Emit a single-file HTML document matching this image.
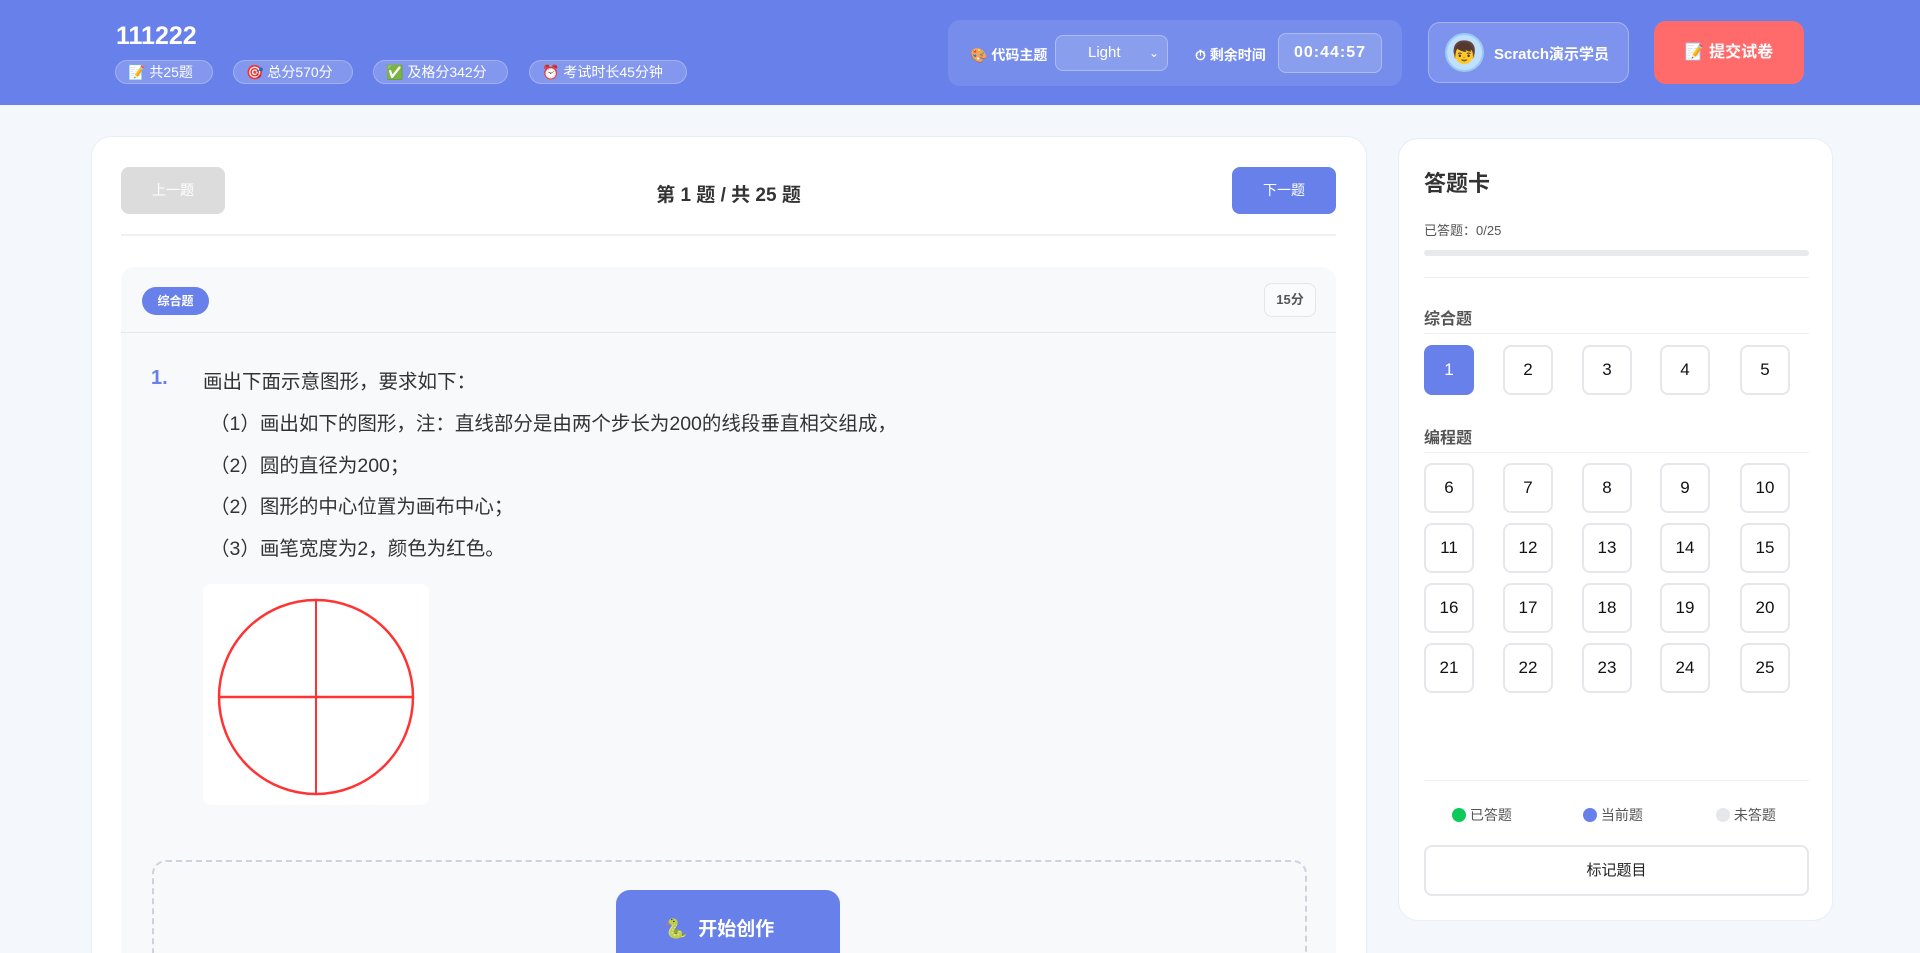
<!DOCTYPE html>
<html><head><meta charset="utf-8"><style>
*{box-sizing:border-box;margin:0;padding:0}
html,body{width:1920px;height:953px;overflow:hidden}
body{background:#f4f7fc;font-family:"Liberation Sans","Noto Sans CJK SC",sans-serif;color:#333}
#w{position:relative;width:1920px;height:953px;overflow:hidden}
.hd{position:absolute;left:0;top:0;width:1920px;height:105px;background:#6780ea}
.ab{position:absolute}
.title{left:116px;top:22px;color:#fff;font-size:25px;font-weight:bold}
.badge{position:absolute;top:60px;height:24px;border-radius:12px;background:rgba(255,255,255,.18);border:1px solid rgba(255,255,255,.25);color:#fff;font-size:14px;line-height:22px;padding-left:12px}
.grp{left:948px;top:20px;width:454px;height:66px;border-radius:12px;background:rgba(255,255,255,.1)}
.lbl{color:#fff;font-size:14px;font-weight:bold;position:absolute;top:45px}
.box{position:absolute;border:1px solid rgba(255,255,255,.3);background:rgba(255,255,255,.15);border-radius:8px;color:#fff}
.card{position:absolute;background:#fff;border-radius:20px;border:1px solid #e6eefb}
.nb{position:absolute;top:167px;width:104px;height:47px;border-radius:8px;color:#fff;font-size:14px;text-align:center;line-height:47px}
.q{position:absolute;font-size:19.5px;color:#333}
.g{position:absolute;width:50px;height:50px;border:2px solid #e5e7eb;border-radius:8px;text-align:center;line-height:46px;font-size:17px;color:#111;background:#fff}
.sec{position:absolute;left:1424px;width:385px;font-size:16px;font-weight:bold;color:#555;border-bottom:1px solid #eceff3;padding-bottom:4px}
</style></head><body><div id="w">
<div class="hd"></div>
<div class="ab title">111222</div>
<div class="badge" style="left:115px;width:98px">📝 共25题</div>
<div class="badge" style="left:233px;width:120px">🎯 总分570分</div>
<div class="badge" style="left:373px;width:135px">✅ 及格分342分</div>
<div class="badge" style="left:529px;width:158px">⏰ 考试时长45分钟</div>
<div class="ab grp"></div>
<div class="lbl" style="left:970px">🎨 代码主题</div>
<div class="box" style="left:1055px;top:35px;width:113px;height:36px;font-size:15px;line-height:34px;padding-left:32px">Light<span style="position:absolute;right:8px;font-size:12px">⌄</span></div>
<div class="lbl" style="left:1195px">⏱ 剩余时间</div>
<div class="box" style="left:1278px;top:33px;width:104px;height:40px;font-size:16px;font-weight:bold;line-height:38px;text-align:center;letter-spacing:1px">00:44:57</div>
<div class="box" style="left:1428px;top:22px;width:201px;height:61px;border-radius:12px"></div>
<div class="ab" style="left:1445px;top:33px;width:39px;height:39px;border-radius:50%;background:#bfe0ff;border:2px solid #9cc8f5;text-align:center;line-height:36px;font-size:22px">👦</div>
<div class="ab" style="left:1494px;top:43px;color:#fff;font-size:15px;font-weight:bold">Scratch演示学员</div>
<div class="ab" style="left:1654px;top:21px;width:150px;height:63px;border-radius:12px;background:#ff6b6b;color:#fff;font-size:16px;font-weight:bold;text-align:center;line-height:63px">📝 提交试卷</div>

<div class="card" style="left:91px;top:136px;width:1276px;height:817px;border-bottom:none;border-radius:20px 20px 0 0"></div>
<div class="nb" style="left:121px;background:#dcdcdc">上一题</div>
<div class="ab" style="left:121px;width:1215px;top:180px;text-align:center;font-size:19px;font-weight:bold;color:#333">第 1 题 / 共 25 题</div>
<div class="nb" style="left:1232px;background:#6780ea">下一题</div>
<div class="ab" style="left:121px;top:234px;width:1215px;height:2px;background:#f0f0f0"></div>
<div class="ab" style="left:121px;top:267px;width:1215px;height:686px;background:#f8f9fb;border-radius:14px 14px 0 0"></div>
<div class="ab" style="left:142px;top:287px;width:67px;height:28px;border-radius:14px;background:#6780ea;color:#fff;font-size:12px;font-weight:bold;text-align:center;line-height:28px">综合题</div>
<div class="ab" style="left:1264px;top:283px;width:52px;height:34px;border-radius:8px;border:1px solid #e3e6ea;background:#fafbfc;color:#555;font-size:13px;font-weight:bold;text-align:center;line-height:32px">15分</div>
<div class="ab" style="left:121px;top:332px;width:1215px;height:1px;background:#e3e6ea"></div>
<div class="q" style="left:151px;top:367px;color:#6780ea;font-weight:bold;font-size:20px">1.</div>
<div class="q" style="left:203px;top:365px">画出下面示意图形，要求如下：</div>
<div class="q" style="left:210px;top:407px">（1）画出如下的图形，注：直线部分是由两个步长为200的线段垂直相交组成，</div>
<div class="q" style="left:210px;top:449px">（2）圆的直径为200；</div>
<div class="q" style="left:210px;top:490px">（2）图形的中心位置为画布中心；</div>
<div class="q" style="left:210px;top:532px">（3）画笔宽度为2，颜色为红色。</div>
<svg class="ab" style="left:203px;top:584px" width="226" height="221"><rect width="226" height="221" rx="8" fill="#fff"/><circle cx="113" cy="113" r="97" fill="none" stroke="#f33" stroke-width="2.5"/><line x1="113" y1="16" x2="113" y2="210" stroke="#f33" stroke-width="2"/><line x1="16" y1="113" x2="210" y2="113" stroke="#f33" stroke-width="2.5"/></svg>
<div class="ab" style="left:152px;top:860px;width:1155px;height:93px;border:2px dashed #ccd3de;border-bottom:none;border-radius:14px 14px 0 0"></div>
<div class="ab" style="left:616px;top:890px;width:224px;height:63px;border-radius:14px 14px 0 0;background:#6780ea;color:#fff;font-size:19px;font-weight:bold;padding:24px 0 0 48px">🐍 &nbsp;开始创作</div>

<div class="card" style="left:1398px;top:138px;width:435px;height:783px"></div>
<div class="ab" style="left:1424px;top:166px;font-size:22px;font-weight:bold;color:#333">答题卡</div>
<div class="ab" style="left:1424px;top:220px;font-size:13px;color:#555">已答题：0/25</div>
<div class="ab" style="left:1424px;top:250px;width:385px;height:6px;border-radius:3px;background:#e8e9ec"></div>
<div class="ab" style="left:1424px;top:277px;width:385px;height:1px;background:#eceff3"></div>
<div class="sec" style="top:305px">综合题</div>
<div class="sec" style="top:424px">编程题</div>
<div class="g" style="left:1424px;top:345px;background:#6780ea;border-color:#6780ea;color:#fff">1</div>
<div class="g" style="left:1503px;top:345px">2</div><div class="g" style="left:1582px;top:345px">3</div><div class="g" style="left:1660px;top:345px">4</div><div class="g" style="left:1740px;top:345px">5</div>
<div class="g" style="left:1424px;top:463px">6</div><div class="g" style="left:1503px;top:463px">7</div><div class="g" style="left:1582px;top:463px">8</div><div class="g" style="left:1660px;top:463px">9</div><div class="g" style="left:1740px;top:463px">10</div>
<div class="g" style="left:1424px;top:523px">11</div><div class="g" style="left:1503px;top:523px">12</div><div class="g" style="left:1582px;top:523px">13</div><div class="g" style="left:1660px;top:523px">14</div><div class="g" style="left:1740px;top:523px">15</div>
<div class="g" style="left:1424px;top:583px">16</div><div class="g" style="left:1503px;top:583px">17</div><div class="g" style="left:1582px;top:583px">18</div><div class="g" style="left:1660px;top:583px">19</div><div class="g" style="left:1740px;top:583px">20</div>
<div class="g" style="left:1424px;top:643px">21</div><div class="g" style="left:1503px;top:643px">22</div><div class="g" style="left:1582px;top:643px">23</div><div class="g" style="left:1660px;top:643px">24</div><div class="g" style="left:1740px;top:643px">25</div>
<div class="ab" style="left:1424px;top:780px;width:385px;height:1px;background:#eceff3"></div>
<div class="ab" style="left:1452px;top:805px;font-size:14px;color:#555"><span style="display:inline-block;width:14px;height:14px;border-radius:50%;background:#0dc95a;vertical-align:-2px"></span> 已答题</div>
<div class="ab" style="left:1583px;top:805px;font-size:14px;color:#555"><span style="display:inline-block;width:14px;height:14px;border-radius:50%;background:#6780ea;vertical-align:-2px"></span> 当前题</div>
<div class="ab" style="left:1716px;top:805px;font-size:14px;color:#555"><span style="display:inline-block;width:14px;height:14px;border-radius:50%;background:#e5e7eb;vertical-align:-2px"></span> 未答题</div>
<div class="ab" style="left:1424px;top:845px;width:385px;height:51px;border:2px solid #e5e7eb;border-radius:8px;text-align:center;line-height:47px;font-size:15px;color:#222">标记题目</div>
</div></body></html>
